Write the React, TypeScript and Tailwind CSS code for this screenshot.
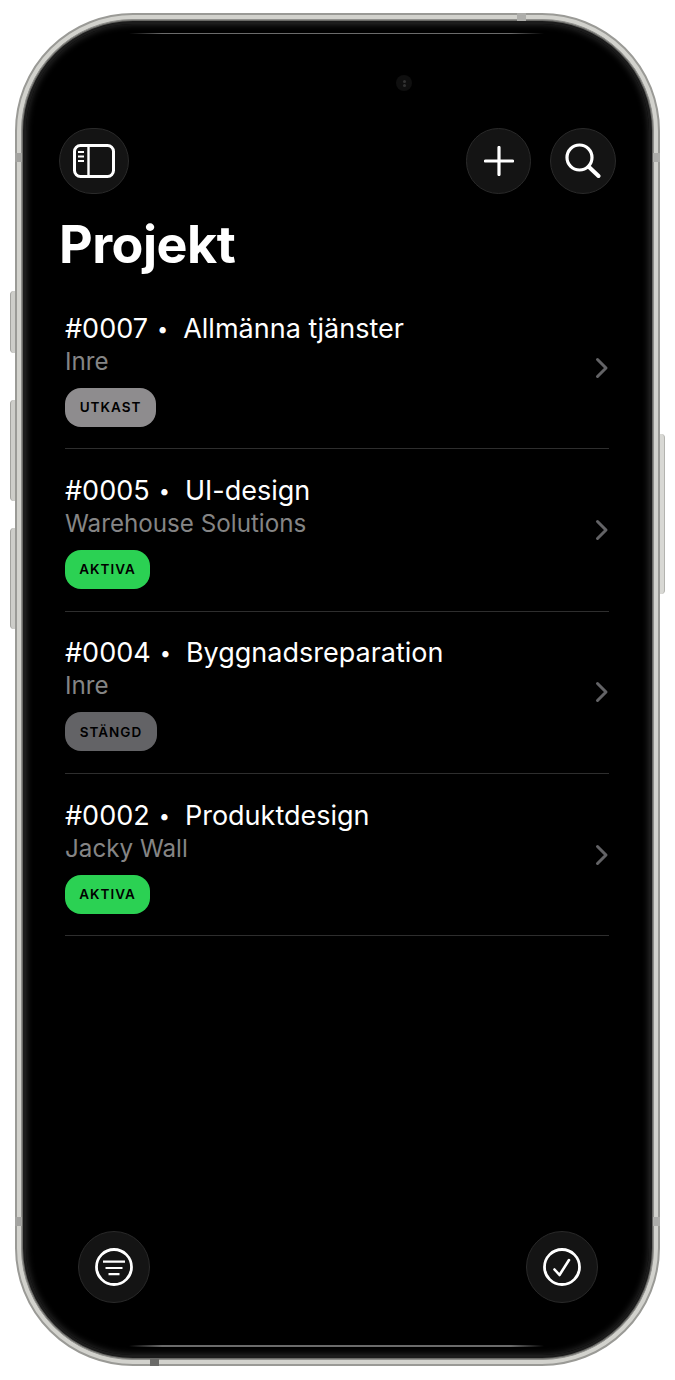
const projects = [
  { id: '#0007', name: 'Allmänna tjänster', client: 'Inre', status: 'UTKAST', pill: 'bg-[#8e8c8e] w-[91px]' },
  { id: '#0005', name: 'UI-design', client: 'Warehouse Solutions', status: 'AKTIVA', pill: 'bg-[#2bd153] w-[85px]' },
  { id: '#0004', name: 'Byggnadsreparation', client: 'Inre', status: 'STÄNGD', pill: 'bg-[#636366] w-[92px]' },
  { id: '#0002', name: 'Produktdesign', client: 'Jacky Wall', status: 'AKTIVA', pill: 'bg-[#2bd153] w-[85px]' },
];

function SidebarIcon() {
  return (
    <svg width="42" height="34" viewBox="0 0 42 34" fill="none" stroke="white">
      <rect x="1.5" y="1.5" width="39" height="31" rx="6" strokeWidth="3" />
      <path d="M15.5 2v30" strokeWidth="2.4" />
      <path d="M5 8h6M5 12.5h6M5 17h6" strokeWidth="1.8" />
    </svg>
  );
}

function PlusIcon() {
  return (
    <svg width="30" height="30" viewBox="0 0 30 30" fill="none" stroke="white" strokeWidth="3.2" strokeLinecap="round">
      <path d="M15 1.5v27M1.5 15h27" />
    </svg>
  );
}

function SearchIcon() {
  return (
    <svg width="36" height="36" viewBox="0 0 36 36" fill="none" stroke="white" strokeLinecap="round">
      <circle cx="14.5" cy="14.5" r="12.5" strokeWidth="3.2" />
      <path d="M24 24l9.5 9" strokeWidth="4" />
    </svg>
  );
}

function FilterIcon() {
  return (
    <svg width="38" height="38" viewBox="0 0 38 38" fill="none" stroke="white">
      <circle cx="19" cy="19" r="17.5" strokeWidth="2.8" />
      <path d="M8 13.7h22M10.5 20h17M13.5 26.2h11" strokeWidth="2.2" />
    </svg>
  );
}

function CheckIcon() {
  return (
    <svg width="38" height="38" viewBox="0 0 38 38" fill="none" stroke="white" strokeLinecap="round" strokeLinejoin="round">
      <circle cx="19" cy="19" r="17.5" strokeWidth="2.8" />
      <path d="M11.5 21.5l5 5.5 9.5-15" strokeWidth="2.6" />
    </svg>
  );
}

function Chevron() {
  return (
    <svg width="14" height="22" viewBox="0 0 14 22" fill="none" stroke="#636366" strokeWidth="3" strokeLinecap="round" strokeLinejoin="round">
      <path d="M2.5 2.5L11 11l-8.5 8.5" />
    </svg>
  );
}

export default function App() {
  return (
    <div className="min-h-screen bg-white pl-[15px] pt-[13px] font-['Inter',sans-serif]">
      <div className="relative w-[645px] h-[1353px] rounded-[118px] border-2 border-[#9a9a96] bg-[#d2d2cd] p-[4px]">
        {/* side buttons */}
        <div className="absolute -left-[7px] top-[276px] w-[5px] h-[62px] rounded-l-sm border-l border-[#a3a39f] bg-[#cdcdc9]" />
        <div className="absolute -left-[7px] top-[385px] w-[5px] h-[101px] rounded-l-sm border-l border-[#a3a39f] bg-[#cdcdc9]" />
        <div className="absolute -left-[7px] top-[513px] w-[5px] h-[101px] rounded-l-sm border-l border-[#a3a39f] bg-[#cdcdc9]" />
        <div className="absolute -right-[7px] top-[419px] w-[5px] h-[160px] rounded-r-sm border-r border-[#b3b3af] bg-[#d8d8d4]" />

        {/* antenna bands */}
        <div className="absolute left-[500px] -top-[2px] w-[9px] h-[8px] bg-[#adadaa]" />
        <div className="absolute left-[133px] -bottom-[2px] w-[9px] h-[8px] bg-[#6a6a68]" />
        <div className="absolute -left-[2px] top-[138px] w-[7px] h-[9px] bg-[#a3a3a0]" />
        <div className="absolute -right-[2px] top-[138px] w-[7px] h-[9px] bg-[#adadaa]" />
        <div className="absolute -left-[2px] bottom-[138px] w-[7px] h-[9px] bg-[#a3a3a0]" />
        <div className="absolute -right-[2px] bottom-[138px] w-[7px] h-[9px] bg-[#adadaa]" />

        <div className="w-full h-full rounded-[112px] border border-[#8f8f8c] p-px bg-[#6a6a67]">
          <div className="relative flex flex-col w-full h-full rounded-[110px] bg-black text-white overflow-hidden border-[3px] border-[#1c1c1c] shadow-[inset_0_0_7px_#333333]">
            {/* screen edge lines and camera */}
            <div className="absolute left-[103px] right-[105px] top-[9px] h-px bg-[linear-gradient(90deg,transparent,#6b6b6b_8%,#6b6b6b_92%,transparent)]" />
            <div className="absolute left-[103px] right-[105px] bottom-[8px] h-[2px] bg-[linear-gradient(90deg,transparent,#6b6b6b_8%,#6b6b6b_92%,transparent)]" />
            <div className="absolute left-[250px] right-[250px] -top-[2px] h-[2px] bg-[#333333]" />
            <div className="absolute left-[370px] top-[51px] flex flex-col items-center justify-center gap-px w-4 h-4 rounded-full bg-[#0f0f0f]">
              <div className="w-[3px] h-[3px] rounded-full bg-[#333333]" />
              <div className="w-[3px] h-[3px] rounded-full bg-[#333333]" />
            </div>

            {/* header */}
            <div className="flex items-center justify-between pl-[33px] pr-[33px] pt-[104px]">
              <button className="flex items-center justify-center w-[70px] h-[66px] rounded-full bg-[#141414] border border-[#2a2a2a]">
                <SidebarIcon />
              </button>
              <div className="flex items-center gap-[19px]">
                <button className="flex items-center justify-center w-[65px] h-[66px] rounded-full bg-[#141414] border border-[#2a2a2a]">
                  <PlusIcon />
                </button>
                <button className="flex items-center justify-center w-[66px] h-[66px] rounded-full bg-[#141414] border border-[#2a2a2a]">
                  <SearchIcon />
                </button>
              </div>
            </div>

            <h1 className="mt-[22px] pl-[33px] text-[52px] leading-[58px] font-bold tracking-[-0.5px]">Projekt</h1>

            {/* project list */}
            <div className="mt-[13px] ml-[39px] mr-[40px]">
              {projects.map((p) => (
                <div key={p.id} className="flex items-center justify-between h-[162.33px] border-b border-[#2e2e2e]">
                  <div className="flex flex-col items-start pt-[3px]">
                    <div className="flex items-center text-[27px] leading-[34px]">
                      <span>{p.id}</span>
                      <span className="ml-[9px] mr-[15px] text-[20px]">•</span>
                      <span>{p.name}</span>
                    </div>
                    <div className="text-[24.2px] leading-[32px] text-[#858585]">{p.client}</div>
                    <div className={`mt-[10px] flex items-center justify-center h-[39px] rounded-[16px] text-[13.5px] font-semibold tracking-[1px] text-black ${p.pill}`}>
                      {p.status}
                    </div>
                  </div>
                  <Chevron />
                </div>
              ))}
            </div>

            {/* bottom buttons */}
            <div className="mt-auto flex items-center justify-between pl-[52px] pr-[51px] pb-[52px]">
              <button className="flex items-center justify-center w-[72px] h-[72px] rounded-full bg-[#141414] border border-[#2a2a2a]">
                <FilterIcon />
              </button>
              <button className="flex items-center justify-center w-[72px] h-[72px] rounded-full bg-[#141414] border border-[#2a2a2a]">
                <CheckIcon />
              </button>
            </div>
          </div>
        </div>
      </div>
    </div>
  );
}
